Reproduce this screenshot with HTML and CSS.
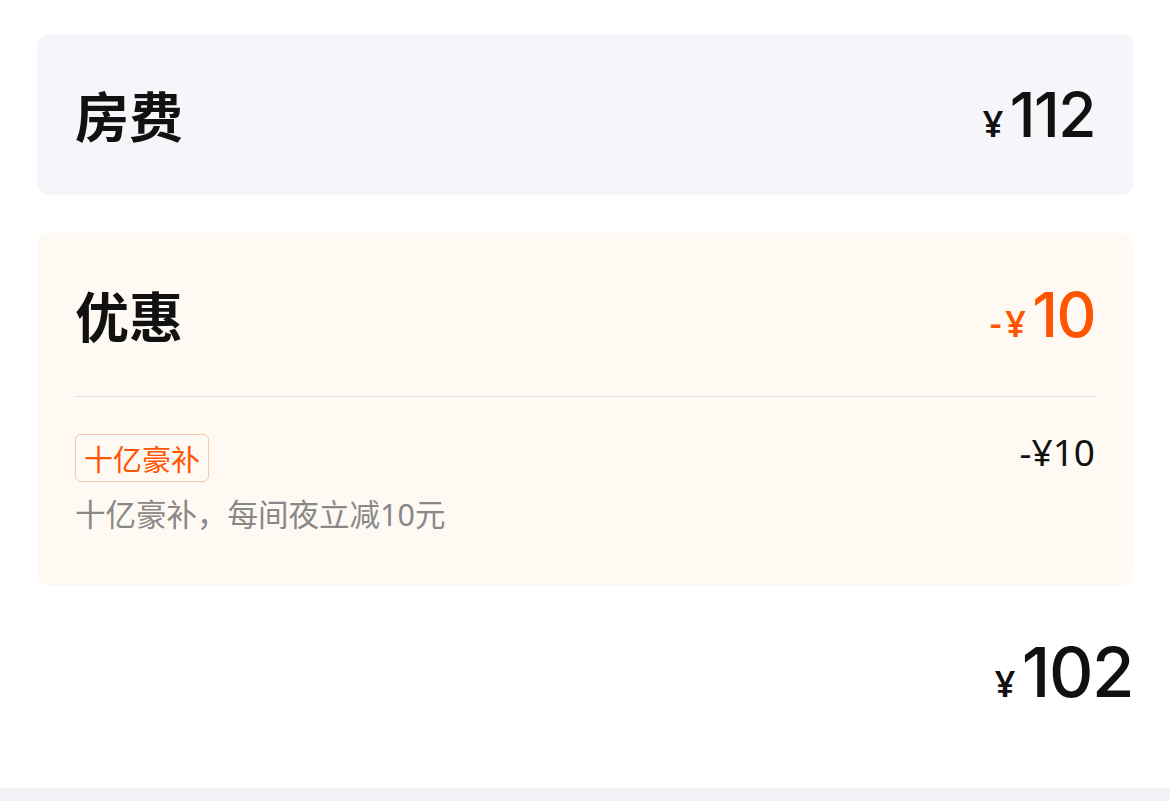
FILE: index.html
```html
<!DOCTYPE html>
<html lang="zh-CN">
<head>
    <meta charset="UTF-8">
    <meta name="viewport" content="width=device-width, initial-scale=1.0">
    <title>价格明细</title>
    <link rel="stylesheet" href="styles.css">
</head>
<body>
    <div class="page">
        <div class="card card-room">
            <div class="title">房费</div>
            <div class="price"><span class="yen">¥</span>112</div>
        </div>

        <div class="card card-discount">
            <div class="discount-head">
                <div class="title">优惠</div>
                <div class="price orange"><span class="minus">-</span><span class="yen">¥</span>10</div>
            </div>
            <div class="discount-item">
                <div class="item-info">
                    <span class="tag">十亿豪补</span>
                    <div class="desc">十亿豪补，每间夜立减10元</div>
                </div>
                <div class="item-price">-¥10</div>
            </div>
        </div>

        <div class="total">
            <div class="price big"><span class="yen">¥</span>102</div>
        </div>
    </div>
    <div class="bottom-bar"></div>
</body>
</html>
```

FILE: styles.css
```css
body {
    margin: 0;
    background: #ffffff;
    font-family: "Noto Sans", "Noto Sans CJK SC", sans-serif;
    color: #111111;
}
.page {
    padding: 34px 37px 0;
}
.card {
    border-radius: 12px;
    padding: 0 38px;
}
.card-room {
    background: #f5f6fa;
    height: 161px;
    display: flex;
    align-items: center;
    justify-content: space-between;
}
.title {
    font-family: "Noto Sans CJK SC", sans-serif;
    font-size: 54px;
    font-weight: 700;
    line-height: 1;
}
.price {
    font-family: Inter, "Noto Sans", sans-serif;
    font-variant-numeric: proportional-nums;
    font-size: 62px;
    font-weight: 500;
    line-height: 1;
    letter-spacing: -1.5px;
    white-space: nowrap;
}
.price .yen {
    font-family: "Noto Sans", sans-serif;
    font-size: 36px;
    font-weight: 600;
    margin-right: 8px;
}
.price.orange {
    color: #ff5500;
}
.price .minus {
    font-family: "Noto Sans", sans-serif;
    font-size: 38px;
    margin-right: 5px;
}
.card-discount {
    background: #fff9f4;
    margin-top: 38px;
}
.discount-head {
    height: 163px;
    display: flex;
    align-items: center;
    justify-content: space-between;
    border-bottom: 1.5px solid #e3e1df;
}
.discount-item {
    display: flex;
    justify-content: space-between;
    align-items: flex-start;
    padding: 37px 0 52px;
}
.tag {
    display: inline-block;
    font-family: "Noto Sans CJK SC", sans-serif;
    font-size: 29px;
    line-height: 46px;
    padding: 0 8px;
    color: #ff5500;
    border: 1px solid #f6c7a6;
    border-radius: 6px;
}
.desc {
    font-family: "Noto Sans", "Noto Sans CJK SC", sans-serif;
    font-size: 30.5px;
    color: #888888;
    line-height: 40px;
    margin-top: 12px;
}
.item-price {
    font-size: 37px;
    line-height: 1;
    margin-top: -1px;
}
.total {
    display: flex;
    justify-content: flex-end;
    padding: 52px 0 0;
    height: 148px;
}
.price.big {
    font-size: 69px;
}
.bottom-bar {
    position: fixed;
    left: 0;
    right: 0;
    bottom: 0;
    height: 13px;
    background: #f2f3f6;
}
```
